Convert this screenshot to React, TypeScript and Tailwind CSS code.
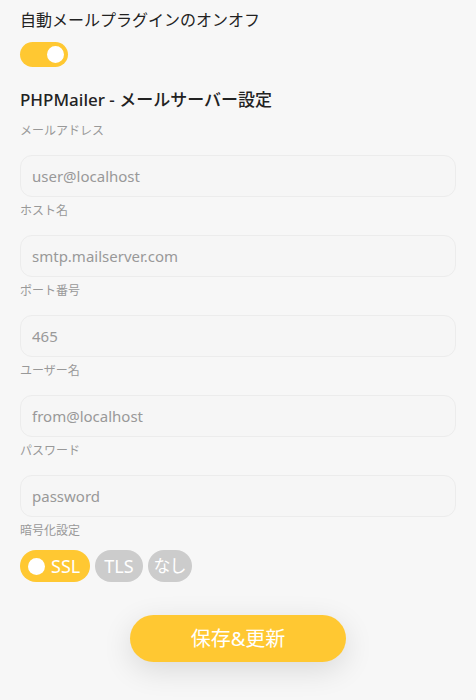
import { useState } from "react";

const fields = [
  { label: "メールアドレス", placeholder: "user@localhost" },
  { label: "ホスト名", placeholder: "smtp.mailserver.com" },
  { label: "ポート番号", placeholder: "465" },
  { label: "ユーザー名", placeholder: "from@localhost" },
  { label: "パスワード", placeholder: "password" },
];

const font = { fontFamily: '"Noto Sans", "Noto Sans CJK JP", sans-serif' };

export default function App() {
  const [enabled, setEnabled] = useState(true);
  const [mode, setMode] = useState("SSL");

  return (
    <div className="min-h-[700px] w-[476px] bg-[#f7f7f7] px-5 pt-[9px]" style={font}>
      <h2 className="text-[16px] leading-[22px] text-[#222]">自動メールプラグインのオンオフ</h2>
      <button
        onClick={() => setEnabled(!enabled)}
        className="mt-[11px] flex h-[25px] w-[48px] items-center justify-end rounded-full bg-[#ffc832] px-[2px]"
      >
        <span className="h-[21px] w-[21px] rounded-full border-2 border-[#ffc832] bg-white" />
      </button>

      <h3 className="mt-[21px] text-[17px] font-medium leading-6 text-[#222]">PHPMailer - メールサーバー設定</h3>

      <div className="mt-[7px]">
        {fields.map((f) => (
          <div key={f.label}>
            <p className="mt-[2px] text-[12px] leading-[24px] text-[#999]">{f.label}</p>
            <input
              placeholder={f.placeholder}
              className="mt-[12px] h-[42px] w-full rounded-xl border border-[#ececec] bg-[#f6f6f6] px-[11px] text-[15px] text-[#555] placeholder:text-[#999] focus:outline-none"
            />
          </div>
        ))}
      </div>

      <p className="mt-[2px] text-[12px] leading-[24px] text-[#999]">暗号化設定</p>
      <div className="mt-[7px] flex gap-[5px]">
        {["SSL", "TLS", "なし"].map((m) => (
          <button
            key={m}
            onClick={() => setMode(m)}
            className={
              mode === m
                ? "flex h-[32px] items-center gap-[6px] rounded-full bg-[#ffc832] pl-[8px] pr-[10px] text-[18px] text-white"
                : m === "なし"
                  ? "flex h-[32px] items-center rounded-full bg-[#cccccc] px-[6px] text-[17px] tracking-[-1px] text-white"
                  : "flex h-[32px] items-center rounded-full bg-[#cccccc] px-[9px] text-[18px] text-white"
            }
          >
            {mode === m && <span className="h-[17px] w-[17px] rounded-full bg-white" />}
            {m}
          </button>
        ))}
      </div>

      <div className="mt-[33px] flex justify-center">
        <button className="h-[47px] w-[216px] rounded-full bg-[#ffc832] text-[20px] text-white shadow-[0_8px_30px_rgba(0,0,0,0.12)]">
          保存&amp;更新
        </button>
      </div>
    </div>
  );
}
